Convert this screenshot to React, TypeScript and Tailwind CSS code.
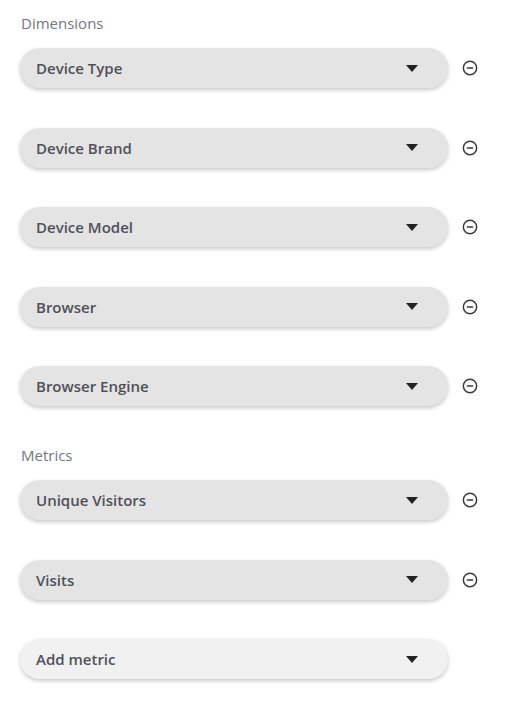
import React from "react";

const dims = ["Device Type", "Device Brand", "Device Model", "Browser", "Browser Engine"];
const metrics = ["Unique Visitors", "Visits"];

function Caret() {
  return (
    <svg width="12" height="7" viewBox="0 0 12 7" className="mr-[30px]">
      <path d="M0 0 L12 0 L6 7 Z" fill="#222" />
    </svg>
  );
}

function MinusCircle() {
  return (
    <svg width="16" height="16" viewBox="0 0 24 24" fill="none" stroke="#3a3a3a" strokeWidth="2.2" strokeLinecap="round">
      <circle cx="12" cy="12" r="10" />
      <path d="M8 12h8" />
    </svg>
  );
}

function Row({ label, removable = true, light = false }: { label: string; removable?: boolean; light?: boolean }) {
  return (
    <div className="flex items-center h-[40px]">
      <div
        className={`flex items-center justify-between w-[428px] h-[40px] rounded-full pl-[16px] shadow-[0_2px_4px_rgba(0,0,0,0.22)] ${
          light ? "bg-[#f1f1f1]" : "bg-[#e4e4e4]"
        }`}
      >
        <span className="text-[15px] font-semibold text-[#505058] pt-[1px]">{label}</span>
        <Caret />
      </div>
      {removable && (
        <div className="ml-[14px] flex items-center">
          <MinusCircle />
        </div>
      )}
    </div>
  );
}

export default function App() {
  return (
    <div
      className="w-[520px] h-[723px] bg-white pl-[20px] pt-[13px]"
      style={{ fontFamily: '"Open Sans", "Noto Sans", sans-serif' }}
    >
      <div className="text-[15px] text-[#767680] pl-[1px] leading-[20px]">Dimensions</div>
      <div className="flex flex-col gap-[39.5px] mt-[15px]">
        {dims.map((d) => (
          <Row key={d} label={d} />
        ))}
      </div>
      <div className="text-[15px] text-[#767680] pl-[1px] leading-[20px] mt-[39px]">Metrics</div>
      <div className="flex flex-col gap-[39.5px] mt-[15px]">
        {metrics.map((d) => (
          <Row key={d} label={d} />
        ))}
        <Row label="Add metric" removable={false} light />
      </div>
    </div>
  );
}
